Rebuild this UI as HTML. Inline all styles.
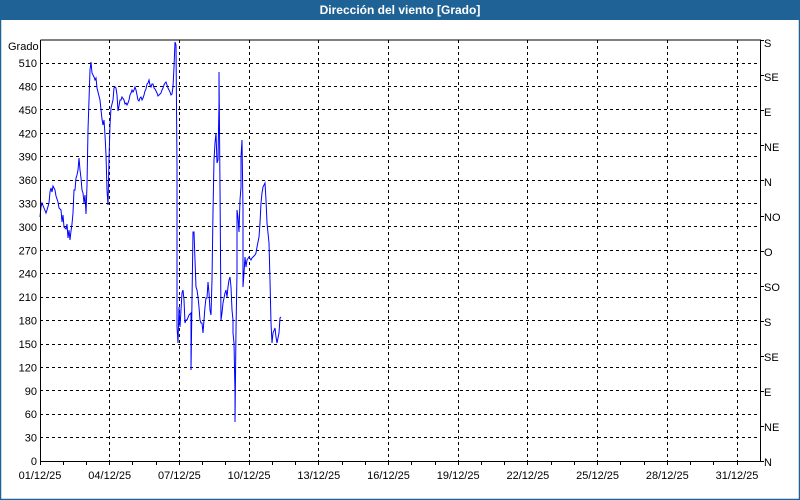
<!DOCTYPE html>
<html><head><meta charset="utf-8"><style>
body{margin:0;width:800px;height:500px;overflow:hidden;background:#fff;}
svg{display:block;font-family:"Liberation Sans","DejaVu Sans",sans-serif;}
</style></head><body>
<svg width="800" height="500" viewBox="0 0 800 500" xmlns="http://www.w3.org/2000/svg">
<rect x="0" y="0" width="800" height="500" fill="#fff"/>
<rect x="0.5" y="0.5" width="799" height="499" fill="none" stroke="#1f6396" stroke-width="1.5"/>
<rect x="0" y="0" width="800" height="20" fill="#1f6396"/>
<text x="400" y="14" fill="#fff" font-size="12" font-weight="bold" text-anchor="middle">Dirección del viento [Grado]</text>
<g stroke="#000" stroke-width="1" stroke-dasharray="3,3" fill="none" shape-rendering="crispEdges">
<path d="M40 437.5H760M40 414.5H760M40 390.5H760M40 367.5H760M40 344.5H760M40 320.5H760M40 297.5H760M40 273.5H760M40 250.5H760M40 226.5H760M40 203.5H760M40 180.5H760M40 156.5H760M40 133.5H760M40 109.5H760M40 86.5H760M40 63.5H760"/>
<path d="M109.5 40V461M179.5 40V461M249.5 40V461M318.5 40V461M388.5 40V461M458.5 40V461M527.5 40V461M597.5 40V461M667.5 40V461M737.5 40V461"/>
</g>
<polyline fill="none" stroke="#0000ff" stroke-width="1" points="40,217 41,207 42,203 44,208 46,213 47,210 49,203 50,192 51,188 52,192 53,186 55,190 56,196 58,202 59,208 61,210 62,222 63,215 64,227 66,229 67,224 68,238 69,230 70,240 71,231 72,224 73,213 74,190 75,190 76,178 77,175 78,170 79,158 80,170 81,178 82,190 83,193 84,203 85,195 86,214 87,185 88,130 89,100 90,70 91,62 92,73 93,75 94,77 95,80 96,78 97,88 99,96 100,100 101,110 102,119 103,125 104,120 105,135 106,155 107,190 108,205 109,160 110,125 111,108 112,104 113,100 114,88 115,87 116,88 117,95 118,111 119,106 120,100 121,100 122,97 124,100 125,104 126,103 127,105 128,103 129,100 130,95 131,93 132,90 133,92 134,90 135,87 136,90 137,95 138,100 139,101 140,98 141,97 142,100 143,98 144,95 145,91 146,89 147,84 148,83 149,80 150,85 151,87 152,84 153,84 154,88 155,89 156,91 157,93 158,96 159,95 160,94 161,93 162,90 163,88 164,85 165,83 166,82 167,85 168,88 169,90 170,92 171,95 172,94 173,87 174,67 175,42 176,45 177,165 177,300 177,327 178,343 179,307 180,327 182,293 183,290 184,300 185,323 186,320 187,320 189,315 191,313 191,370 192,300 193,232 194,232 195,260 196,287 197,290 198,297 199,307 200,320 201,323 202,323 203,333 204,320 205,307 206,298 207,298 208,282 209,293 210,310 211,315 212,280 213,212 214,160 215,143 216,133 217,163 218,160 219,103 219,72 220,187 221,320 222,313 223,303 225,293 226,290 227,297 228,287 229,280 230,277 231,287 232,310 233,320 233,333 234,343 235,393 235,422 236,330 237,273 237,210 238,217 239,232 240,200 241,187 241,157 242,140 243,210 243,287 244,273 245,257 246,267 247,260 249,257 251,260 252,258 253,257 255,255 256,253 257,247 259,237 260,223 261,203 262,193 263,187 265,183 266,200 267,223 269,243 270,280 271,323 272,343 273,333 275,328 276,337 277,343 279,333 280,318 281,317"/>
<g stroke="#000" stroke-width="1" fill="none" shape-rendering="crispEdges">
<path d="M40.5 40V461.5H760.5V40H40.5"/>
<path d="M63.5 461v4M86.5 461v4M109.5 461v4M132.5 461v4M156.5 461v4M179.5 461v4M202.5 461v4M225.5 461v4M249.5 461v4M272.5 461v4M295.5 461v4M318.5 461v4M342.5 461v4M365.5 461v4M388.5 461v4M411.5 461v4M435.5 461v4M458.5 461v4M481.5 461v4M504.5 461v4M527.5 461v4M551.5 461v4M574.5 461v4M597.5 461v4M620.5 461v4M644.5 461v4M667.5 461v4M690.5 461v4M713.5 461v4M737.5 461v4M40.5 461v4"/>
<path d="M760 40.5h4M760 75.5h4M760 110.5h4M760 145.5h4M760 180.5h4M760 216.5h4M760 251.5h4M760 286.5h4M760 321.5h4M760 356.5h4M760 391.5h4M760 426.5h4M760 461.5h4"/>
</g>
<g font-size="11" fill="#000" text-anchor="end">
<text x="8" y="50" text-anchor="start">Grado</text>
<text x="37" y="67">510</text><text x="37" y="90.4">480</text><text x="37" y="113.8">450</text><text x="37" y="137.3">420</text><text x="37" y="160.7">390</text><text x="37" y="184.1">360</text><text x="37" y="207.5">330</text><text x="37" y="230.9">300</text><text x="37" y="254.3">270</text><text x="37" y="277.7">240</text><text x="37" y="301.1">210</text><text x="37" y="324.5">180</text><text x="37" y="348">150</text><text x="37" y="371.4">120</text><text x="37" y="394.8">90</text><text x="37" y="418.2">60</text><text x="37" y="441.6">30</text><text x="37" y="465">0</text>
</g>
<g font-size="11" fill="#000">
<text x="764" y="47">S</text><text x="764" y="81">SE</text><text x="764" y="116">E</text><text x="764" y="151">NE</text><text x="764" y="186">N</text><text x="764" y="221">NO</text><text x="764" y="256">O</text><text x="764" y="291">SO</text><text x="764" y="326">S</text><text x="764" y="361">SE</text><text x="764" y="396">E</text><text x="764" y="431">NE</text><text x="764" y="466">N</text>
</g>
<g font-size="11" fill="#000" text-anchor="middle">
<text x="40" y="479">01/12/25</text><text x="109.7" y="479">04/12/25</text><text x="179.4" y="479">07/12/25</text><text x="249.1" y="479">10/12/25</text><text x="318.8" y="479">13/12/25</text><text x="388.5" y="479">16/12/25</text><text x="458.2" y="479">19/12/25</text><text x="527.9" y="479">22/12/25</text><text x="597.6" y="479">25/12/25</text><text x="667.3" y="479">28/12/25</text><text x="737" y="479">31/12/25</text>
</g>
</svg>
</body></html>
